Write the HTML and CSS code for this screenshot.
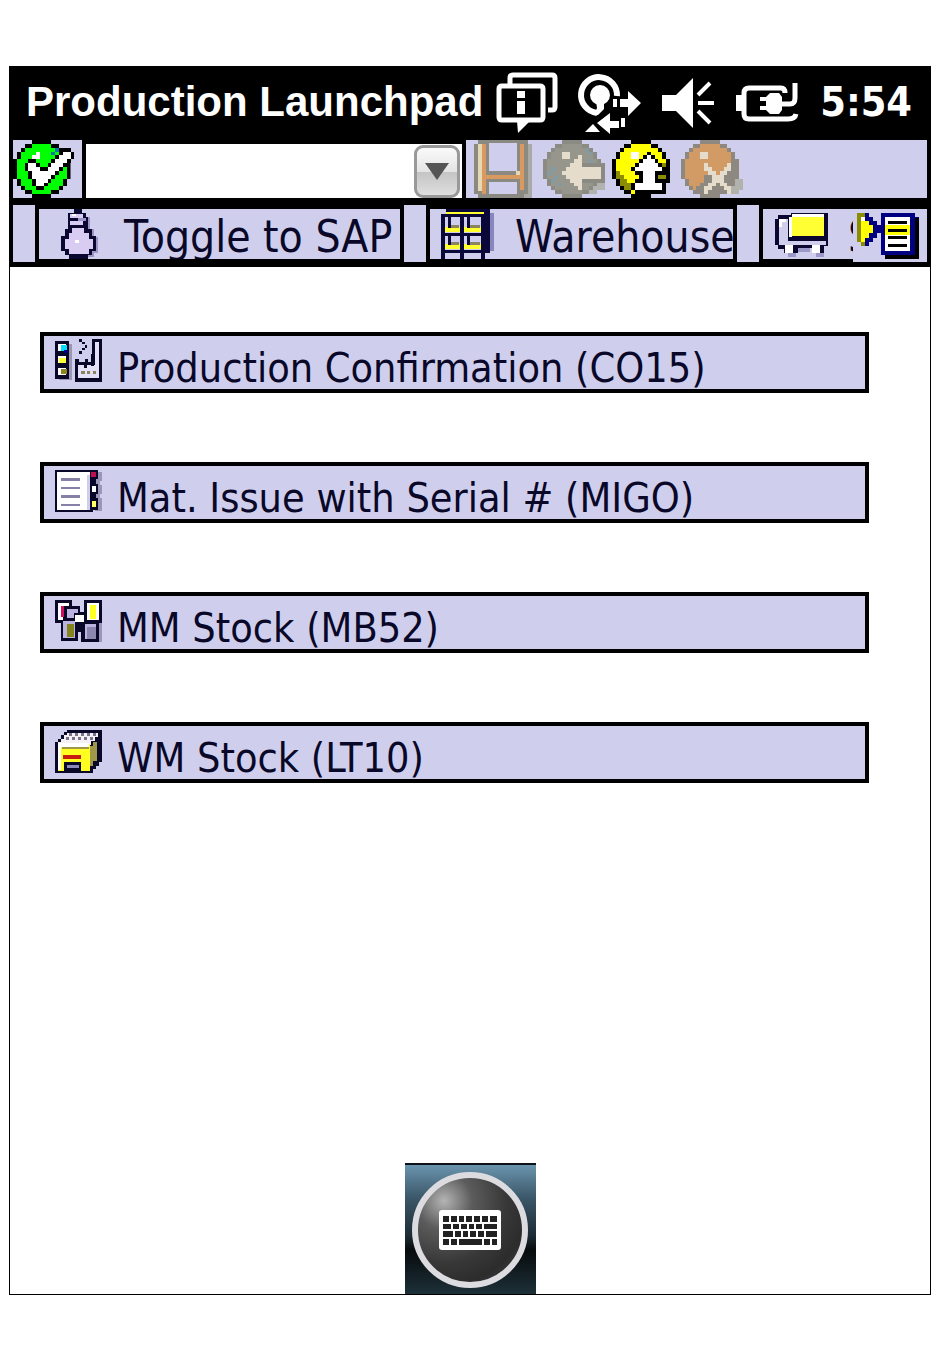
FILE: index.html
```
<!DOCTYPE html>
<html lang="en">
<head>
    <meta charset="UTF-8">
    <meta name="viewport" content="width=device-width, initial-scale=1.0">
    <title>Production Launchpad</title>
    <link rel="stylesheet" href="styles.css">
</head>
<body>
    <svg class="defs" aria-hidden="true">
        <!-- Pixel ball shared by the toolbar buttons -->
        <symbol id="ball-ring" viewBox="0 0 15 15">
            <path d="M5 0h5v1h2v1h1v1h1v2h1v5h-1v2h-1v1h-1v1h-2v1h-5v-1h-2v-1h-1v-1h-1v-2h-1v-5h1v-2h1v-1h1v-1h2z"/>
        </symbol>
        <symbol id="ball-fill" viewBox="0 0 15 15">
            <path d="M5 1h5v1h2v1h1v2h1v5h-1v2h-1v1h-2v1h-5v-1h-2v-1h-1v-2h-1v-5h1v-2h1v-1h2z"/>
        </symbol>
        <path id="check" d="M13 3h2v1h-2zM12 4h3v1h-3zM11 5h3v1h-3zM10 6h3v1h-3zM4 6h2v1h-2zM9 7h3v1h-3zM4 7h3v1h-3zM5 8h6v1h-6zM5 9h5v1h-5zM6 10h3v1h-3zM6 11h2v1h-2z"/>
        <path id="arrow-up" d="M9 4h1v1h-1zM8 5h3v1h-3zM7 6h5v1h-5zM6 7h7v1h-7zM8 8h3v3h-3zM6 11h7v2h-7z"/>
    </svg>

    <div class="device">
        <header class="status-bar">
            <h1>Production Launchpad</h1>
            <div class="status-icons">
                <!-- Messages -->
                <svg width="62" height="62" viewBox="0 0 62 62" fill="none" stroke="#fff" stroke-width="5">
                    <path d="M14 13V7q0-3 3-3h39q3 0 3 3v29q0 3-3 3h-4"/>
                    <path d="M6 15h38q3 0 3 3v28q0 3-3 3H6q-3 0-3-3V18q0-3 3-3z"/>
                    <path d="M21 50h13L22 62z" fill="#fff" stroke="none"/>
                    <path d="M21 20h8v7h-8zM21 30h8v13h-8z" fill="#fff" stroke="none"/>
                </svg>
                <!-- Connection -->
                <svg width="62" height="62" viewBox="0 0 62 62" fill="#fff">
                    <path d="M38 25a18 18 0 1 0-20 17" fill="none" stroke="#fff" stroke-width="6"/>
                    <circle cx="21" cy="24" r="10"/>
                    <path d="M17 30h8v8l-6 6h-4l3-7zM34 28h4v8h-4zM41 28h8v-8l13 12-13 13v-9h-8zM31 42v8h9v7h-9v6L18 52zM42 47h4v9h-4zM6 61l8-8 7 8z"/>
                </svg>
                <!-- Volume -->
                <svg width="54" height="62" viewBox="0 0 54 62" fill="#fff">
                    <path d="M0 24h14L31 7v50L14 40H0z"/>
                    <path d="M36 24l12-12M36 32h16M36 40l12 12" stroke="#fff" stroke-width="4"/>
                </svg>
                <!-- Battery on charger -->
                <svg width="62" height="62" viewBox="0 0 62 62" fill="none" stroke="#fff" stroke-width="5">
                    <path d="M48 22q0-5-4-5H12q-5 0-5 5v21q0 5 5 5h39q7 0 8-5"/>
                    <path d="M-1 24h7v16h-7z" fill="#fff" stroke="none"/>
                    <path d="M44 33h9q5 0 5-6V12"/>
                    <path d="M23 28h8M23 37h8" stroke-width="4"/>
                    <path d="M33 22h9l3 4v13l-3 4h-9l-4-4V26z" fill="#fff" stroke="none"/>
                </svg>
                <time class="clock">5:54</time>
            </div>
        </header>

        <form class="toolbar">
            <button class="ok-button" type="button" aria-label="Enter">
                <svg width="69" height="58" viewBox="0 0 18 15" preserveAspectRatio="none" shape-rendering="crispEdges">
                    <use href="#ball-ring" width="15" height="15"/>
                    <use href="#ball-fill" width="15" height="15" fill="#0f0"/>
                    <path fill="#fff" d="M6 3h1v2h-2v-1h1z"/>
                    <path fill="#0878a8" d="M11 2h1v1h-1zM10 3h1v1h-1z"/>
                    <use href="#check" x="-1"/>
                    <use href="#check" x="1"/>
                    <use href="#check" y="-1"/>
                    <use href="#check" y="1"/>
                    <use href="#check" fill="#fff"/>
                </svg>
            </button>
            <div class="command">
                <input type="text" aria-label="Command">
                <button class="drop" type="button" aria-label="Command history">
                    <svg width="24" height="17" viewBox="0 0 24 17"><path d="M0 0h24L12 17z" fill="#555"/></svg>
                </button>
            </div>
            <div class="actions">
                <button type="button" aria-label="Save" disabled>
                    <svg width="58" height="58" viewBox="0 0 58 58" shape-rendering="crispEdges">
                        <path fill="#a9a9a8" d="M54 4h4v54H4v-4h50z"/>
                        <path fill="#8b8a82" d="M0 4h4V0h50v54h-4v4H4v-4H0z"/>
                        <path fill="#e6d8b4" d="M4 4h4v47H4z"/>
                        <path fill="#d99a62" d="M8 4h4v50H8zM46 4h4v46h-4zM12 35h34v4H12z"/>
                        <path fill="#cfcfed" d="M15 3h28v28H15zM15 42h28v12H15z"/>
                        <path fill="#e6d8b4" d="M42 31h4v4h-4z"/>
                    </svg>
                </button>
                <button type="button" aria-label="Back" disabled>
                    <svg width="58" height="58" viewBox="0 0 15 15" shape-rendering="crispEdges">
                        <path fill="#b2b2b0" d="M13 10h3v3h-2v1h-3z"/>
                        <use href="#ball-ring" width="15" height="15" fill="#8b8b84"/>
                        <use href="#ball-fill" width="15" height="15" fill="#96968c"/>
                        <path fill="#7f9ca6" d="M11 2h1v1h-1zM12 3h1v1h-1zM12 5h1v1h-1zM2 7h1v1h-1zM1 8h1v1h-1zM3 9h1v1h-1zM2 10h1v1h-1zM4 11h1v1h-1z"/>
                        <path fill="#e6dccb" d="M5 3h2v2h-2z"/>
                        <path fill="#8b8b84" d="M10 6h6v5h-6z"/>
                        <path fill="#e6dccb" d="M9 4h1v3h5v3h-5v3h-1v-1h-1v-1h-1v-1h-1v-1h-1v-1h1v-1h1v-1h1v-1h1z"/>
                    </svg>
                </button>
                <button type="button" aria-label="Exit">
                    <svg width="58" height="58" viewBox="0 0 15 15" shape-rendering="crispEdges">
                        <use href="#ball-ring" width="15" height="15"/>
                        <use href="#ball-fill" width="15" height="15" fill="#ff0"/>
                        <path fill="#8c8c00" d="M1 8h1v1h1v1h1v1h1v2h-2v-1h-1v-2h-1zM13 6h1v1h-1z"/>
                        <path fill="#fff" d="M5 3h2v2h-2z"/>
                        <path d="M11 8h4v3h-1v3h-3z"/>
                        <path fill="#8c8c00" d="M12 9h2v1h-2z"/>
                        <use href="#arrow-up" x="-1"/>
                        <use href="#arrow-up" x="1"/>
                        <use href="#arrow-up" y="-1"/>
                        <use href="#arrow-up" y="1"/>
                        <path fill="#ff0" d="M5 9h2v1h-2z"/>
                        <use href="#arrow-up" fill="#fff"/>
                    </svg>
                </button>
                <button type="button" aria-label="Cancel" disabled>
                    <svg width="58" height="58" viewBox="0 0 15 15" shape-rendering="crispEdges">
                        <path fill="#b2b2ac" d="M13 10h3v3h-1v1h-4z"/>
                        <use href="#ball-ring" width="15" height="15" fill="#8d8980"/>
                        <use href="#ball-fill" width="15" height="15" fill="#d29b66"/>
                        <path fill="#8d8980" d="M13 5h1v5h-1v4h-8v-1h-1v-1h1v-1h1v-2h2v-1h1v2h2v-3h2z"/>
                        <path fill="#e6dccb" d="M5 3h2v2h-2zM6 6h1v1h1v1h1v1h1v-1h1v-1h1v-1h1v2h-1v1h-1v2h1v1h1v2h-1v-1h-1v-1h-1v-1h-1v1h-1v1h-1v1h-1v-2h1v-1h1v-2h-1v-1h-1z"/>
                    </svg>
                </button>
            </div>
        </form>

        <nav class="tabs">
            <span class="spacer"></span>
            <button class="tab tab-sap" type="button">
                <svg width="54" height="50" viewBox="0 0 54 50" shape-rendering="crispEdges">
                    <path fill="#9c94c4" d="M36 8h4v12h4v8h4v16h-4v4h-8z"/>
                    <path fill="#0a0830" d="M24 0h8v4h4v4h2v12h4v7h4v15h-4v4h-4v4H19v-4h-4v-4h-4V27h4v-7h3V4h6z"/>
                    <path fill="#d8ccf2" d="M20 5h13v4H20zM20 12h13v4H20zM22 19h12v5h5v6h4v10h-4v5H19v-5h-4V30h4v-6h3z"/>
                    <path fill="#9c94c4" d="M28 9h8v3h-8z"/>
                    <path fill="#fff" d="M22 5h4v2h-4zM25 31h4v3h-4z"/>
                </svg>
                <span>Toggle to SAP</span>
            </button>
            <span class="spacer"></span>
            <button class="tab tab-warehouse" type="button">
                <svg width="54" height="50" viewBox="0 0 54 50" shape-rendering="crispEdges">
                    <path fill="#8884bc" d="M48 4h5v38h-5z"/>
                    <path fill="#0a0838" d="M5 0h44v44h-6V5H5z"/>
                    <path fill="#cfcfed" d="M4 8h38v42H4z"/>
                    <path fill="#ffff30" d="M5 3h38v3H5zM4 18h38v5H4zM4 35h38v5H4z"/>
                    <path fill="#8c8460" d="M10 16h8v3h-8zM29 16h10v3H29zM10 33h8v3h-8zM29 33h10v3H29z"/>
                    <path fill="#0a0838" d="M0 5h43v3H0zM0 24h43v3H0zM0 41h43v3H0zM0 5h4v45H0zM19 5h4v45h-4zM40 5h4v45h-4zM7 8h3v11H7zM26 8h3v11h-3zM7 27h3v9H7zM26 27h3v9h-3z"/>
                </svg>
                <span>Warehouse</span>
            </button>
            <span class="spacer"></span>
            <button class="tab tab-stock" type="button">
                <svg width="54" height="50" viewBox="0 0 54 50" shape-rendering="crispEdges">
                    <path fill="#9c98c8" d="M14 44h8v4h-8zM42 44h8v4h-8zM24 39h12v4H24z"/>
                    <path fill="#0a0830" d="M4 6h13V4h37v33h-4v7H38v-5H24v5H10v-4H4v-4H1V10h3z"/>
                    <path fill="#cfcfed" d="M5 10h9v22h38v4H5z"/>
                    <path fill="#ff3" d="M18 8h32v19H18z"/>
                    <path fill="#fff" d="M18 5h32v3H18zM15 8h3v20h-3zM5 10h7v3H8v5H5zM11 36h8v8h-8zM38 36h8v8h-8z"/>
                </svg>
                <span>S</span>
            </button>
            <button class="menu-button" type="button" aria-label="Menu">
                <svg width="64" height="46" viewBox="0 0 64 46" shape-rendering="crispEdges">
                    <path fill="#8c8c00" d="M0 0h8v4h4v4h4v4h3v8h-3v5h-4v4H8v4H4v-4H0z"/>
                    <path fill="#000080" d="M8 0h4v4h4v4h4v4h4V0h34v4h4v42H28v-4h-4V20h-4v5h-4v4h-4v4H8z"/>
                    <path fill="#000" d="M58 5h4v41H28v-4h30z"/>
                    <path fill="#ff0" d="M4 4h4v4h4v4h4v8h-4v5H8v4H4z"/>
                    <path fill="#fff" d="M28 4h25v34H28zM4 4h4v4H4z"/>
                    <path fill="#ff0" d="M28 12h25v10H28z"/>
                    <path fill="#000" d="M31 8h19v3H31zM31 16h19v3H31zM31 23h19v3H31zM31 31h19v3H31z"/>
                </svg>
            </button>
        </nav>

        <main class="launchpad">
            <button class="entry" type="button">
                <svg width="48" height="44" viewBox="0 0 48 44" shape-rendering="crispEdges">
                    <path fill="#9a96b4" d="M14 5h3v36H4v-2h10z"/>
                    <path fill="#0a0828" d="M0 2h14v38H0z"/>
                    <path fill="#fff" d="M3 5h8v7H3zM3 17h8v7H3zM3 29h8v7H3z"/>
                    <path fill="#0df" d="M6 6h6v6H6z"/>
                    <path fill="#0000a0" d="M9 11h3v3H9z"/>
                    <path fill="#ff3" d="M4 19h7v5H4z"/>
                    <path fill="#8c8420" d="M6 30h6v5H6z"/>
                    <path fill="#0a0828" d="M24 0h3v3h-3zM27 3h3v2h-3zM30 6h2v3h-2zM27 9h3v2h-3zM24 12h3v3h-3zM20 20h4v3h6v-3h3v3h4V0h10v43H20z"/>
                    <path fill="#e4e0f8" d="M40 3h4v36H23V26h17z"/>
                    <path fill="#0a0828" d="M29 23h3v6h-3zM36 15h3v12h-3z"/>
                    <path fill="#8c8460" d="M26 32h4v3h-4zM32 32h3v3h-3zM38 32h3v3h-3z"/>
                </svg>
                <span>Production Confirmation (CO15)</span>
            </button>
            <button class="entry" type="button">
                <svg width="48" height="44" viewBox="0 0 48 44" shape-rendering="crispEdges">
                    <path fill="#9a96b8" d="M40 3h7v9h-2v4h2v9h-2v4h2v13h-7z"/>
                    <path fill="#0a0828" d="M0 1h43v9h-2v5h2v10h-2v4h2v12h-5v2H0z"/>
                    <path fill="#fff" d="M2 3h33v38H2z"/>
                    <path fill="#cfcfed" d="M32 6h3v35h-3z"/>
                    <path fill="#8680a8" d="M6 9h19v3H6zM6 18h19v2H6zM6 26h19v3H6zM6 35h19v2H6z"/>
                    <path fill="#c01050" d="M36 3h5v5h-5z"/>
                    <path fill="#fff" d="M37 17h4v6h-4z"/>
                    <path fill="#ff6" d="M37 32h4v6h-4z"/>
                </svg>
                <span>Mat. Issue with Serial # (MIGO)</span>
            </button>
            <button class="entry" type="button">
                <svg width="48" height="44" viewBox="0 0 48 44" shape-rendering="crispEdges">
                    <path fill="#9a96b8" d="M44 24h3v19h-3z"/>
                    <path fill="#0a0828" d="M0 1h17v6h8v6h4V1h18v23h-3v19H26V33h-3v9H6V24H0z"/>
                    <path fill="#fff" d="M3 4h11v3H8v14H3zM32 4h12v17H32zM20 16h9v7h-9z"/>
                    <path fill="#d01060" d="M6 7h3v11H6z"/>
                    <path fill="#bbb4e0" d="M12 10h11v4h-4v5h-7zM8 22h12v17H8zM30 25h11v15H30z"/>
                    <path fill="#ff2" d="M35 6h6v14h-6z"/>
                    <path fill="#84841c" d="M12 25h7v13h-7z"/>
                    <path fill="#8c88b0" d="M32 28h9v12h-9z"/>
                </svg>
                <span>MM Stock (MB52)</span>
            </button>
            <button class="entry" type="button">
                <svg width="48" height="44" viewBox="0 0 48 44" shape-rendering="crispEdges">
                    <path fill="#0a0828" d="M12 1h35v32h-3v4h-3v3h-3v4H0V13h3v-3h3V6h3V3h3z"/>
                    <path fill="#f4f0f4" d="M12 4h31v4h-3v4h-4v4H3v-3h3v-3h3V6h3z"/>
                    <path fill="#77738c" d="M14 4h3v3h-3zM20 4h3v3h-3zM26 4h3v3h-3zM32 4h3v3h-3zM38 4h3v3h-3zM11 8h3v3h-3zM17 8h3v3h-3zM23 8h3v3h-3zM29 8h3v3h-3zM35 8h3v3h-3z"/>
                    <path fill="#ff2" d="M3 15h32v27h-9v-9H9v9H3z"/>
                    <path fill="#fff" d="M3 14h31v4H6v23H3z"/>
                    <path fill="#a09848" d="M35 17h3v-4h4v19h-4v5h-3zM7 18h27v2H7z"/>
                    <path fill="#c81c10" d="M8 26h18v4H8z"/>
                    <path fill="#8c88b8" d="M12 36h12v3H12z"/>
                </svg>
                <span>WM Stock (LT10)</span>
            </button>
        </main>

        <button class="keyboard" type="button" aria-label="Show keyboard">
            <span class="keyboard-ring">
                <svg width="62" height="40" viewBox="0 0 62 40">
                    <rect width="62" height="40" rx="3" fill="#fff"/>
                    <g fill="#222">
                        <path d="M4 6h6v6H4zM12 6h6v6h-6zM20 6h5v6h-5zM27 6h6v6h-6zM35 6h6v6h-6zM43 6h6v6h-6zM51 6h7v6h-7z"/>
                        <path d="M4 14h8v5H4zM14 14h6v5h-6zM22 14h6v5h-6zM30 14h5v5h-5zM37 14h6v5h-6zM45 14h13v5H45z"/>
                        <path d="M4 21h10v6H4zM16 21h6v6h-6zM24 21h5v6h-5zM31 21h6v6h-6zM39 21h6v6h-6zM47 21h11v6H47z"/>
                        <path d="M4 29h6v6H4zM12 29h6v6h-6zM20 29h23v6H20zM45 29h6v6h-6zM53 29h5v6h-5z"/>
                    </g>
                </svg>
            </span>
        </button>
    </div>
</body>
</html>
```

FILE: styles.css
```
:root {
    --panel: #cfcfed;
    --ink: #0a0828;
    --ui-font: "DejaVu Sans Condensed", "DejaVu Sans", Tahoma, sans-serif;
}
* {
    box-sizing: border-box;
}
body {
    display: flex;
    min-height: 100vh;
    margin: 0;
    padding: 66px 15px 60px 9px;
    background-color: #fff;
    font-family: var(--ui-font);
}
button {
    margin: 0;
    padding: 0;
    border: 0;
    background: none;
    color: var(--ink);
    font-family: inherit;
}
svg {
    display: block;
    flex-shrink: 0;
    overflow: visible;
}
.defs {
    position: absolute;
    width: 0;
    height: 0;
    overflow: hidden;
}
.device {
    display: flex;
    flex: 1;
    flex-direction: column;
    min-width: 0;
    border: 1px solid #000;
}

/* Status bar */
.status-bar {
    display: flex;
    align-items: center;
    justify-content: space-between;
    height: 73px;
    padding: 0 18px 4px 16px;
    background-color: #000;
    color: #fff;
}
.status-bar h1 {
    margin: 0;
    font: bold 42px "Liberation Sans", Arial, sans-serif;
    white-space: nowrap;
}
.status-icons {
    display: flex;
    align-items: center;
    gap: 21px;
}
.clock {
    font-size: 41px;
    font-weight: bold;
}

/* Command toolbar */
.toolbar {
    display: grid;
    grid-template-columns: 69px 376px 1fr;
    gap: 4px;
    height: 65px;
    padding: 0 3px 7px;
    background-color: #000;
}
.ok-button,
.actions {
    background-color: var(--panel);
}
.command {
    display: flex;
    margin-top: 4px;
    padding: 1px 2px 0 0;
    background-color: #fff;
}
.command input {
    flex: 1;
    min-width: 0;
    padding: 0 8px;
    border: 0;
    outline: 0;
    background: none;
    font: 36px var(--ui-font);
}
.drop {
    display: flex;
    align-items: center;
    justify-content: center;
    width: 46px;
    border: 3px solid #999;
    border-radius: 9px;
    background: linear-gradient(#fafafa, #e4e4e4 50%, #c4c4c4 51%, #dedede);
}
.actions {
    display: flex;
    gap: 11px;
    padding-left: 8px;
}

/* Application tabs */
.tabs {
    position: relative;
    display: flex;
    gap: 4px;
    height: 62px;
    padding: 0 3px 5px;
    background-color: #000;
}
.spacer {
    width: 22px;
    background-color: var(--panel);
}
.tab {
    display: flex;
    align-items: flex-start;
    gap: 20px;
    height: 50px;
    margin-top: 4px;
    padding-left: 11px;
    overflow: hidden;
    background-color: var(--panel);
    font-size: 44px;
    line-height: 56px;
    white-space: nowrap;
}
.tab-sap {
    width: 361px;
}
.tab-warehouse {
    width: 303px;
}
.tab-stock {
    flex: 1;
    min-width: 0;
}
.menu-button {
    position: absolute;
    top: 4px;
    right: 3px;
    display: flex;
    width: 74px;
    height: 53px;
    padding: 4px;
    background-color: var(--panel);
}

/* Launchpad entries */
.launchpad {
    display: flex;
    flex: 1;
    flex-direction: column;
    gap: 69px;
    padding: 65px 61px 65px 30px;
}
.entry {
    display: flex;
    align-items: flex-start;
    gap: 14px;
    height: 61px;
    padding: 3px 11px 0;
    border: 4px solid #000;
    background-color: var(--panel);
    font-size: 41px;
    line-height: 58px;
    text-align: left;
    white-space: nowrap;
}

/* Soft keyboard toggle */
.keyboard {
    display: flex;
    align-items: center;
    justify-content: center;
    align-self: center;
    width: 131px;
    height: 131px;
    border-top: 2px solid #0c1218;
    background: linear-gradient(#6a94ae, #3c586a 25%, #1d2b34 55%, #070b0d 66%, #1d3038);
}
.keyboard-ring {
    display: flex;
    align-items: center;
    justify-content: center;
    width: 116px;
    height: 116px;
    border: 6px solid #dcdce0;
    border-radius: 50%;
    background: radial-gradient(circle at 25% 22%, #b4b4b4, #5c5c5c 25%, #383838 55%, #2c2c2c 75%, #484848);
}
```
